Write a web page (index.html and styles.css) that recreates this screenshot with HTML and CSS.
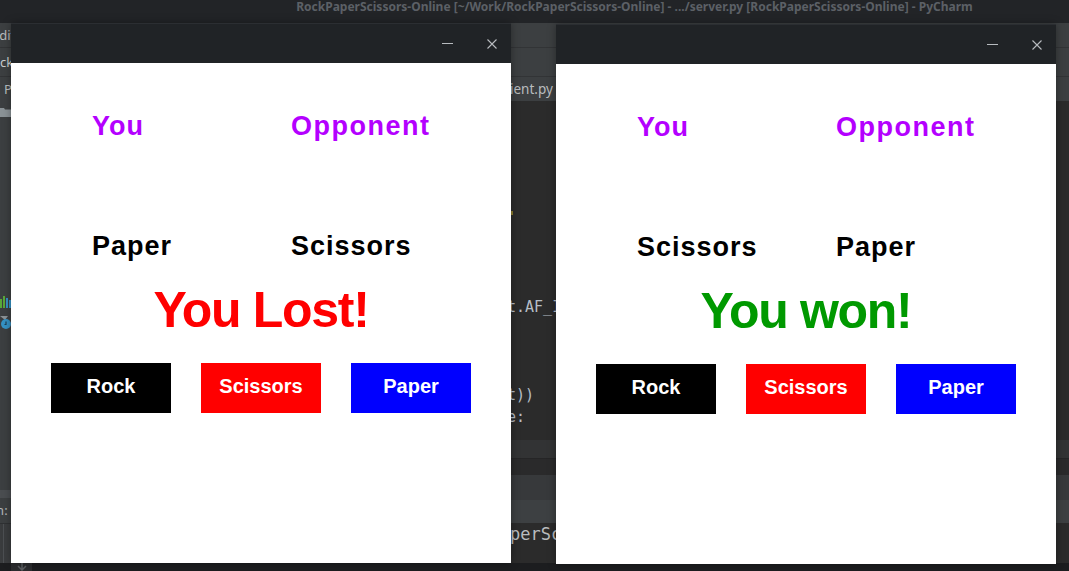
FILE: index.html
```html
<!DOCTYPE html>
<html>
<head>
<meta charset="utf-8">
<title>RockPaperScissors</title>
<link rel="stylesheet" href="styles.css">
</head>
<body>
<div class="desktop">
  <div class="ide">
    <div class="ide-title"><span>RockPaperScissors-Online [~/Work/RockPaperScissors-Online] - .../server.py [RockPaperScissors-Online] - PyCharm</span></div>
    <div class="ide-menu"><span class="menu-text">Edit</span></div>
    <div class="ide-nav"><span class="nav-text">RockPaper</span></div>
    <div class="ide-tabs">
      <span class="proj-tab">Project</span>
      <span class="file-tab">client.py</span>
    </div>
    <div class="ide-main">
      <div class="proj">
        <svg class="folder" width="11" height="10" viewBox="0 0 11 10"><path d="M0 1h4l1 1.5h6V10H0z" fill="#8a9296"/></svg>
        <div class="proj-fill"></div>
        <svg class="bars" width="11" height="13" viewBox="0 0 11 13"><rect x="0" y="4" width="2" height="9" fill="#59a83a"/><rect x="3" y="1" width="2" height="12" fill="#59a83a"/><rect x="6" y="3" width="2" height="10" fill="#3592c4"/><rect x="9" y="5" width="2" height="8" fill="#3592c4"/></svg>
        <svg class="clock" width="11" height="14" viewBox="0 0 11 14"><path d="M0 0h8l-3 4z" fill="#8a9296"/><circle cx="6" cy="8" r="5" fill="#3592c4"/><path d="M6 5.5v3h-1.5" stroke="#1e3e52" stroke-width="1.2" fill="none"/></svg>
        <div class="proj-rest"></div>
        <div class="proj-band"></div>
        <div class="proj-row"><span>Run:</span></div>
        <div class="proj-bottom"><div class="vline"></div></div>
      </div>
      <div class="editor-col">
        <div class="editor">
          <div class="mark"></div>
          <div class="code">
            <div class="ln">t.AF_INET, sock</div>
            <div class="ln"></div>
            <div class="ln"></div>
            <div class="ln"></div>
            <div class="ln">t))</div>
            <div class="ln">e:</div>
          </div>
        </div>
        <div class="band b1"></div>
        <div class="band b2"></div>
        <div class="band b3"></div>
        <div class="band b4"></div>
        <div class="term"><span>perScissors</span></div>
      </div>
    </div>
    <div class="ide-status">
      <div class="status-gap"></div>
      <div class="status-box">
        <svg width="10" height="8" viewBox="0 0 10 8"><path d="M5 0v6M1 3l4 4 4-4" stroke="#5a5d60" stroke-width="1.5" fill="none"/></svg>
      </div>
    </div>
  </div>

  <div class="window win-left">
    <div class="titlebar">
      <svg class="tb-min" width="11" height="11" viewBox="0 0 11 11"><path d="M0 5.5h11" stroke="#b8bbbf" stroke-width="1"/></svg>
      <svg class="tb-close" width="10" height="10" viewBox="0 0 10 10"><path d="M0.5 0.5l9 9M9.5 0.5l-9 9" stroke="#b8bbbf" stroke-width="1.1"/></svg>
    </div>
    <div class="client">
      <div class="row names"><span>You</span><span class="opp">Opponent</span></div>
      <div class="row moves"><span>Paper</span><span>Scissors</span></div>
      <div class="result lost">You Lost!</div>
      <div class="buttons">
        <div class="btn rock">Rock</div>
        <div class="btn scissors">Scissors</div>
        <div class="btn paper">Paper</div>
      </div>
    </div>
  </div>

  <div class="window win-right">
    <div class="titlebar">
      <svg class="tb-min" width="11" height="11" viewBox="0 0 11 11"><path d="M0 5.5h11" stroke="#b8bbbf" stroke-width="1"/></svg>
      <svg class="tb-close" width="10" height="10" viewBox="0 0 10 10"><path d="M0.5 0.5l9 9M9.5 0.5l-9 9" stroke="#b8bbbf" stroke-width="1.1"/></svg>
    </div>
    <div class="client">
      <div class="row names"><span>You</span><span class="opp">Opponent</span></div>
      <div class="row moves"><span>Scissors</span><span>Paper</span></div>
      <div class="result won">You won!</div>
      <div class="buttons">
        <div class="btn rock">Rock</div>
        <div class="btn scissors">Scissors</div>
        <div class="btn paper">Paper</div>
      </div>
    </div>
  </div>
</div>
</body>
</html>
```

FILE: styles.css
```css
html, body {
  margin: 0;
  padding: 0;
  background: #1e1f21;
  overflow: hidden;
}

.desktop {
  position: relative;
  width: 1069px;
  height: 571px;
  overflow: hidden;
}

/* ---------- IDE background ---------- */
.ide {
  display: flex;
  flex-direction: column;
  width: 1069px;
  height: 571px;
  font-family: "Noto Sans", "DejaVu Sans", sans-serif;
}

.ide-title {
  height: 23px;
  flex: none;
  background: #222427;
  display: flex;
  justify-content: center;
  padding-left: 200px;
  box-sizing: border-box;
  color: #5c6066;
  font-weight: bold;
  font-size: 12px;
  line-height: 13px;
  white-space: nowrap;
}

.ide-menu {
  height: 24px;
  flex: none;
  background: #3c3f41;
  border-bottom: 1px solid #323436;
  color: #b9bcbe;
  font-size: 13px;
  line-height: 24px;
  overflow: hidden;
}
.menu-text { display: inline-block; margin-left: -8px; }

.ide-nav {
  height: 28px;
  flex: none;
  background: #3c3f41;
  border-bottom: 1px solid #323436;
  color: #c9ccce;
  font-size: 13px;
  line-height: 28px;
  overflow: hidden;
  white-space: nowrap;
}
.nav-text { display: inline-block; margin-left: -16px; }

.ide-tabs {
  height: 24px;
  flex: none;
  background: #3c3f41;
  color: #b9bcbe;
  font-size: 14px;
  line-height: 24px;
  display: flex;
  overflow: hidden;
  white-space: nowrap;
}
.proj-tab { display: inline-block; margin-left: 4px; width: 496px; flex: none; font-size: 13px; }
.file-tab { display: inline-block; flex: none; font-size: 13.5px; }

.ide-main {
  height: 462px;
  flex: none;
  display: flex;
}

.proj {
  width: 300px;
  flex: none;
  background: #3c3f41;
  display: flex;
  flex-direction: column;
}
.folder { margin-top: 6px; flex: none; }
.proj-fill { height: 178px; flex: none; }
.bars { flex: none; }
.clock { margin-top: 8px; flex: none; }
.proj-rest { flex: 1; }
.proj-band { height: 8px; background: #4a4d50; flex: none; }
.proj-row {
  height: 25px;
  flex: none;
  border-bottom: 1px solid #2f3133;
  color: #b0b3b6;
  font-size: 13px;
  line-height: 25px;
  overflow: hidden;
}
.proj-row span { display: inline-block; margin-left: -20px; }
.proj-bottom {
  height: 39px;
  flex: none;
  background: #3a3c3e;
  display: flex;
}
.vline { width: 1px; margin-left: 3px; background: #4c4f52; }

.editor-col {
  flex: 1;
  display: flex;
  flex-direction: column;
  background: #2b2b2b;
}

.editor {
  height: 339px;
  flex: none;
  background: #2b2b2b;
  display: flex;
  flex-direction: column;
  overflow: hidden;
}
.mark {
  width: 2px;
  height: 4px;
  background: #8a7a2c;
  margin-top: 110px;
  margin-left: 211px;
  flex: none;
}
.code {
  margin-top: 81px;
  margin-left: 207px;
  font-family: "DejaVu Sans Mono", monospace;
  font-size: 15px;
  line-height: 22px;
  color: #b6bec6;
  flex: none;
}
.ln { height: 22px; white-space: pre; }

.band { flex: none; }
.b1 { height: 18px; background: #323334; }
.b2 { height: 17px; background: #2a2a2b; border-top: 1px solid #252526; box-sizing: border-box; }
.b3 { height: 25px; background: #37393b; }
.b4 { height: 23px; background: #3d4042; }

.term {
  height: 40px;
  flex: none;
  background: #2b2b2b;
  font-family: "DejaVu Sans Mono", monospace;
  font-size: 17px;
  line-height: 22px;
  color: #b9bcbe;
  white-space: pre;
  overflow: hidden;
}
.term span { display: inline-block; margin-left: 210px; }

.ide-status {
  height: 8px;
  flex: none;
  background: #1c1d1f;
  display: flex;
}
.status-gap { width: 11px; }
.status-box {
  width: 21px;
  background: #2b2c2e;
  display: flex;
  justify-content: center;
  overflow: hidden;
}

/* ---------- Game windows ---------- */
.window {
  position: absolute;
  width: 500px;
  display: flex;
  flex-direction: column;
  box-shadow: 0 0 8px rgba(0, 0, 0, 0.35);
}
.win-left { left: 11px; top: 23px; }
.win-right { left: 556px; top: 24px; }

.titlebar {
  height: 40px;
  background: #202326;
  border-top: 1px solid #2b2e32;
  box-sizing: border-box;
  display: flex;
  align-items: center;
  justify-content: flex-end;
  gap: 34px;
  padding-right: 14px;
}
.tb-min { display: block; }
.tb-close { display: block; }

.client {
  height: 500px;
  background: #ffffff;
  box-sizing: border-box;
  padding-top: 47px;
  font-family: "Liberation Sans", Arial, sans-serif;
  font-weight: bold;
  display: flex;
  flex-direction: column;
}

.row {
  display: grid;
  grid-template-columns: 199px 200px;
  padding-left: 81px;
  font-size: 27px;
  line-height: 32px;
  height: 32px;
  letter-spacing: 1px;
}
.names { color: #b400ff; }
.opp { letter-spacing: 1.5px; }
.moves { color: #000000; margin-top: 88px; }

.result {
  text-align: center;
  font-size: 50px;
  line-height: 58px;
  margin-top: 19px;
  letter-spacing: -1.3px;
}
.lost { color: #ff0000; }
.won { color: #009900; }

.buttons {
  display: flex;
  gap: 30px;
  padding-left: 40px;
  margin-top: 24px;
}
.btn {
  width: 120px;
  height: 50px;
  box-sizing: border-box;
  padding-bottom: 3px;
  display: flex;
  align-items: center;
  justify-content: center;
  color: #ffffff;
  font-size: 20px;
}
.rock { background: #000000; }
.scissors { background: #ff0000; }
.paper { background: #0000ff; }
```
